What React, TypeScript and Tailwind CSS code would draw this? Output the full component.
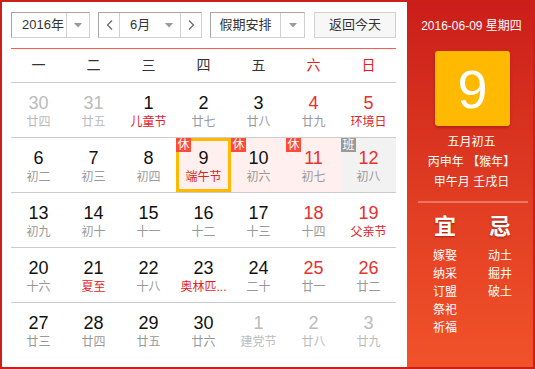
import React from "react";

type Cell = {
  d: string;
  l: string;
  other?: boolean;
  redNum?: boolean;
  fest?: boolean;
  badge?: "休" | "班";
  sel?: boolean;
};

const rows: Cell[][] = [
  [
    { d: "30", l: "廿四", other: true },
    { d: "31", l: "廿五", other: true },
    { d: "1", l: "儿童节", fest: true },
    { d: "2", l: "廿七" },
    { d: "3", l: "廿八" },
    { d: "4", l: "廿九", redNum: true },
    { d: "5", l: "环境日", redNum: true, fest: true },
  ],
  [
    { d: "6", l: "初二" },
    { d: "7", l: "初三" },
    { d: "8", l: "初四" },
    { d: "9", l: "端午节", fest: true, badge: "休", sel: true },
    { d: "10", l: "初六", badge: "休" },
    { d: "11", l: "初七", redNum: true, badge: "休" },
    { d: "12", l: "初八", redNum: true, badge: "班" },
  ],
  [
    { d: "13", l: "初九" },
    { d: "14", l: "初十" },
    { d: "15", l: "十一" },
    { d: "16", l: "十二" },
    { d: "17", l: "十三" },
    { d: "18", l: "十四", redNum: true },
    { d: "19", l: "父亲节", redNum: true, fest: true },
  ],
  [
    { d: "20", l: "十六" },
    { d: "21", l: "夏至", fest: true },
    { d: "22", l: "十八" },
    { d: "23", l: "奥林匹...", fest: true },
    { d: "24", l: "二十" },
    { d: "25", l: "廿一", redNum: true },
    { d: "26", l: "廿二", redNum: true },
  ],
  [
    { d: "27", l: "廿三" },
    { d: "28", l: "廿四" },
    { d: "29", l: "廿五" },
    { d: "30", l: "廿六" },
    { d: "1", l: "建党节", other: true },
    { d: "2", l: "廿八", other: true },
    { d: "3", l: "廿九", other: true },
  ],
];

const font = { fontFamily: '"Liberation Sans", "Noto Sans CJK SC", sans-serif' };

function Tri() {
  return (
    <svg width="8" height="5" viewBox="0 0 8 5">
      <polygon points="0,0 8,0 4,4.5" fill="#999" />
    </svg>
  );
}

function Chev({ dir }: { dir: "l" | "r" }) {
  return (
    <svg width="7" height="10" viewBox="0 0 7 10">
      <polyline
        points={dir === "l" ? "6,0.5 1.5,5 6,9.5" : "1,0.5 5.5,5 1,9.5"}
        fill="none"
        stroke="#666"
        strokeWidth="1.2"
      />
    </svg>
  );
}

function DayCell({ c }: { c: Cell }) {
  let bg = "";
  if (c.badge === "休") bg = "bg-[#fff0ef]";
  if (c.badge === "班") bg = "bg-[#f2f2f2]";
  const numColor = c.other ? "text-[#bbb]" : c.redNum ? "text-[#e8302c]" : "text-[#111]";
  const lunColor = c.other ? "text-[#bbb]" : c.fest ? "text-[#e3221f]" : "text-[#999]";
  return (
    <div className={`relative flex flex-col items-center pt-[10px] ${bg}`}>
      {c.sel && <div className="absolute inset-0 border-[3px] border-[#ffb900]" />}
      {c.badge && (
        <div
          className={`absolute left-0 top-0 w-[15px] h-[14px] flex items-center justify-center text-[12px] leading-none text-white ${
            c.badge === "休" ? "bg-[#ff4a3a]" : "bg-[#999]"
          }`}
        >
          {c.badge}
        </div>
      )}
      <div className={`relative text-[18px] leading-[20px] ${numColor}`}>{c.d}</div>
      <div className={`relative text-[12px] leading-[18px] ${lunColor}`}>{c.l}</div>
    </div>
  );
}

export default function App() {
  const weeks = ["一", "二", "三", "四", "五", "六", "日"];
  return (
    <div style={font} className="w-[535px] h-[369px] border-2 border-[#cc1f1a] flex bg-white overflow-hidden">
      <div className="w-[405px] bg-white pl-[9px] pt-[10px]">
        <div className="w-[385px]">
          <div className="flex h-[26px] text-[13px] text-[#333]">
            <div className="w-[79px] flex border-t border-l border-b border-r border-t-[#a5a5a5] border-l-[#a5a5a5] border-b-[#d0d0d0] border-r-[#d0d0d0]">
              <div className="w-[54px] flex items-center pl-[10px]">2016年</div>
              <div className="flex-1 border-l border-[#d0d0d0] flex items-center justify-center">
                <Tri />
              </div>
            </div>
            <div className="ml-[8px] w-[104px] flex border-t border-l border-b border-r border-t-[#a5a5a5] border-l-[#a5a5a5] border-b-[#d0d0d0] border-r-[#d0d0d0]">
              <div className="w-[21px] flex items-center justify-center border-r border-[#d0d0d0]">
                <Chev dir="l" />
              </div>
              <div className="w-[60px] flex items-center pl-[10px]">
                <span>6月</span>
                <span className="ml-[15px] flex">
                  <Tri />
                </span>
              </div>
              <div className="flex-1 flex items-center justify-center border-l border-[#d0d0d0]">
                <Chev dir="r" />
              </div>
            </div>
            <div className="ml-[8px] w-[95px] flex border-t border-l border-b border-r border-t-[#a5a5a5] border-l-[#a5a5a5] border-b-[#d0d0d0] border-r-[#d0d0d0]">
              <div className="w-[69px] flex items-center justify-center">假期安排</div>
              <div className="flex-1 border-l border-[#d0d0d0] flex items-center justify-center">
                <Tri />
              </div>
            </div>
            <div className="ml-[9px] w-[82px] flex items-center justify-center border border-[#d0d0d0] bg-[#f7f7f7]">
              返回今天
            </div>
          </div>

          <div className="mt-[10px] border-t border-[#ff5a4a] border-b border-b-[#cccccc] h-[35px] grid grid-cols-7 items-center text-[14px]">
            {weeks.map((w, i) => (
              <div key={w} className={`text-center ${i >= 5 ? "text-[#e3221f]" : "text-[#333]"}`}>
                {w}
              </div>
            ))}
          </div>

          {rows.map((r, i) => (
            <div
              key={i}
              className={`grid grid-cols-7 h-[55px] ${i < rows.length - 1 ? "border-b border-[#cccccc]" : ""}`}
            >
              {r.map((c, j) => (
                <DayCell key={j} c={c} />
              ))}
            </div>
          ))}
        </div>
      </div>

      <div className="flex-1 bg-gradient-to-b from-[#cb1d1a] to-[#f2522a] text-white flex flex-col items-center pt-[16px]">
        <div className="text-[12px] leading-[16px] pl-[3px]">2016-06-09 星期四</div>
        <div className="mt-[17px] ml-[5px] w-[75px] h-[75px] rounded-[3px] bg-[#ffb900] shadow-[0_2px_3px_rgba(120,0,0,0.35)] flex items-center justify-center text-[54px] leading-none">
          9
        </div>
        <div className="mt-[6px] text-[12px] leading-[20px] text-center ml-[3px]">
          <div>五月初五</div>
          <div>丙申年 【猴年】</div>
          <div>甲午月 壬戌日</div>
        </div>
        <div className="mt-[9px] ml-[5px] w-[110px] h-[2px] bg-white/30" />
        <div className="mt-[11px] flex gap-[31px] ml-[5px]">
          <div className="w-[24px] flex flex-col items-center">
            <div className="text-[22px] leading-[26px] font-bold [text-shadow:0_1px_2px_rgba(100,0,0,0.5)]">宜</div>
            <div className="mt-[7px] text-[12px] leading-[18px] flex flex-col">
              <span>嫁娶</span>
              <span>纳采</span>
              <span>订盟</span>
              <span>祭祀</span>
              <span>祈福</span>
            </div>
          </div>
          <div className="w-[24px] flex flex-col items-center">
            <div className="text-[22px] leading-[26px] font-bold [text-shadow:0_1px_2px_rgba(100,0,0,0.5)]">忌</div>
            <div className="mt-[7px] text-[12px] leading-[18px] flex flex-col">
              <span>动土</span>
              <span>掘井</span>
              <span>破土</span>
            </div>
          </div>
        </div>
      </div>
    </div>
  );
}
